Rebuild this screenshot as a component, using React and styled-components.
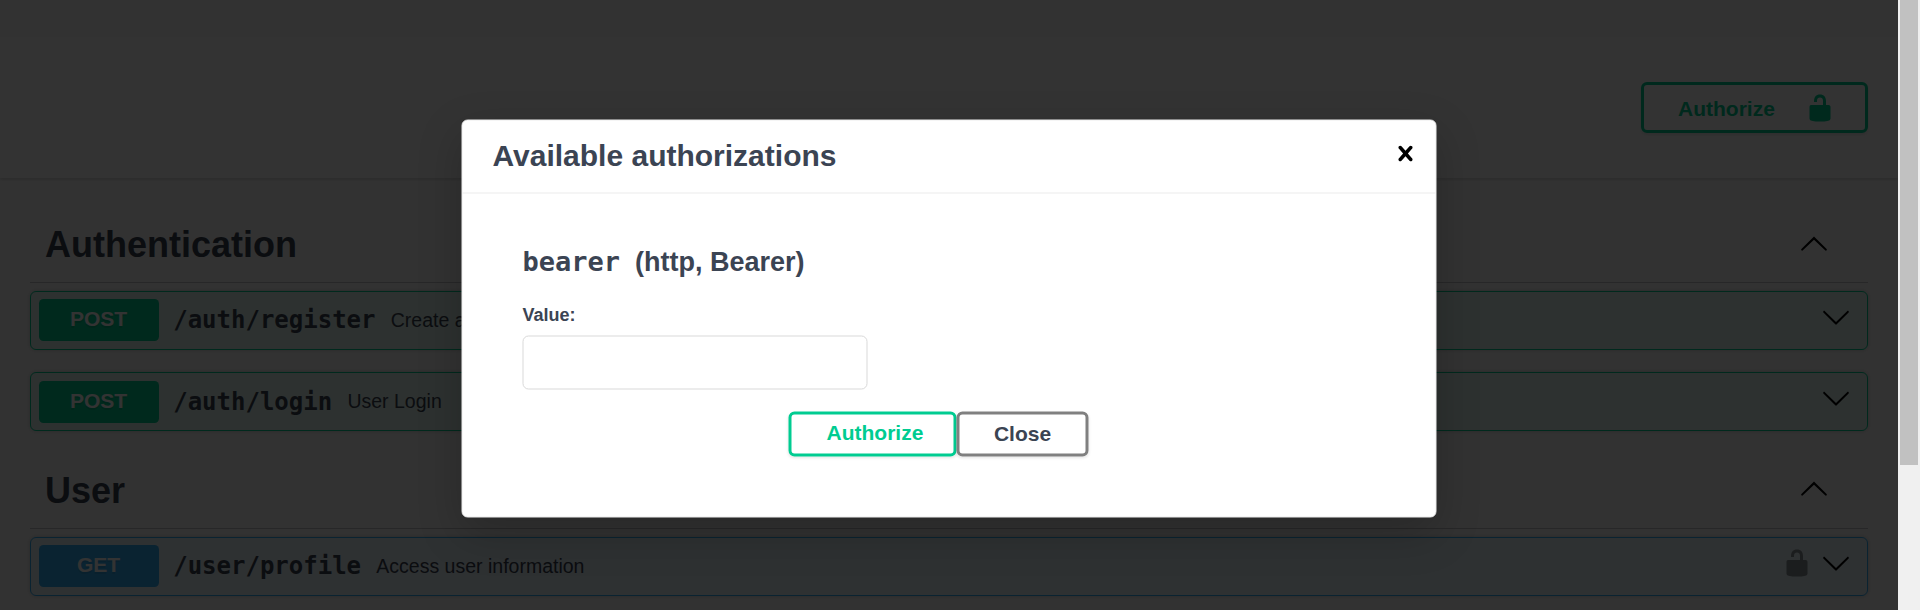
import React from "react";
import styled, { createGlobalStyle } from "styled-components";

const SANS = '"Liberation Sans", Arial, sans-serif';
const MONO = '"DejaVu Sans Mono", "Liberation Mono", monospace';
const INK = "#3b4453";
const GREEN = "#00cc91";
const BLUE = "#35aff5";

const GlobalStyle = createGlobalStyle`
  *, *::before, *::after { box-sizing: border-box; }
  html, body { margin: 0; padding: 0; }
  body { font-family: ${SANS}; color: ${INK}; background: #fafafa; overflow: hidden; }
`;

const Screen = styled.div`
  position: relative;
  display: flex;
  width: 1920px;
  height: 610px;
  overflow: hidden;
`;

const Page = styled.main`
  width: 1898px;
  height: 610px;
  padding-top: 37px;
  background: #fafafa;
  overflow: hidden;
`;

const ScrollTrack = styled.div`
  position: relative;
  z-index: 2;
  width: 22px;
  padding: 0 2px;
  background: #f0f0f0;
`;

const ScrollThumb = styled.div`
  height: 465px;
  background: #c1c1c1;
`;

const SchemeBar = styled.section`
  display: flex;
  justify-content: flex-end;
  height: 141px;
  padding: 45px 30px;
  background: #fff;
  box-shadow: 0 1.5px 3px rgba(0, 0, 0, 0.15);
`;

const Button = styled.button`
  display: flex;
  align-items: center;
  height: 45px;
  padding: 0;
  border: 3px solid ${(p) => p.$border};
  border-radius: 6px;
  background: transparent;
  box-shadow: 0 1.5px 3px rgba(0, 0, 0, 0.1);
  color: ${(p) => p.$color};
  font: bold 21px/39px ${SANS};
`;

const OpenAuthButton = styled(Button)`
  justify-content: space-between;
  width: 227px;
  height: 51px;
  padding: 0 30px 0 34px;

  span { padding-top: 2px; }
`;

const AuthorizeButton = styled(Button)`
  width: 168px;
  padding: 0 0 4px 35px;
`;

const CloseButton = styled(Button)`
  justify-content: center;
  width: 132px;
  padding-bottom: 2px;
`;

const Sections = styled.div`
  display: flex;
  flex-direction: column;
  padding: 30px 30px 0;
`;

const TagSection = styled.section`
  margin-bottom: 22.6px;
`;

const TagHeader = styled.h3`
  display: flex;
  justify-content: space-between;
  align-items: flex-start;
  height: 75px;
  margin: 0 0 8px;
  padding: 15px 39px 15px 15px;
  border-bottom: 1px solid rgba(59, 65, 81, 0.3);
  font: bold 36px/44px ${SANS};

  svg { margin-top: 4.5px; }
`;

const Operations = styled.div`
  display: flex;
  flex-direction: column;
  gap: 22.4px;
`;

const Operation = styled.div`
  display: flex;
  align-items: center;
  height: 59px;
  padding: 7.4px 16px 7.6px 8px;
  border: 1px solid ${(p) => p.$color};
  border-radius: 6px;
  background: ${(p) => p.$tint};
  box-shadow: 0 0 4.5px rgba(0, 0, 0, 0.19);
`;

const Method = styled.span`
  width: 120px;
  height: 42px;
  padding-right: 1px;
  border-radius: 4.5px;
  background: ${(p) => p.$color};
  color: #fff;
  font: bold 21px/40px ${SANS};
  text-align: center;
  text-shadow: 0 1.5px 0 rgba(0, 0, 0, 0.1);
`;

const Path = styled.span`
  margin: 0 15.3px 0 14.2px;
  font: bold 24px/28px ${MONO};
`;

const Summary = styled.span`
  flex: 1;
  padding-bottom: 1px;
  font: 19.5px/22px ${SANS};
`;

const OperationIcons = styled.span`
  display: flex;
  gap: 9.2px;
  align-self: flex-start;
  margin-top: 2.6px;
`;

const Icon = styled.svg`
  display: block;
  flex: none;
  width: 30px;
  height: 30px;
  fill: ${(p) => p.$fill || "#000"};
  opacity: ${(p) => p.$opacity || 1};
`;

const Backdrop = styled.div`
  position: absolute;
  inset: 0 22px 0 0;
  background: rgba(0, 0, 0, 0.8);
`;

const Dialog = styled.div`
  position: absolute;
  top: 319px;
  left: 50%;
  width: 975px;
  height: 398px;
  transform: translate(-50%, calc(-50% - 0.5px));
  border: 1px solid #ebebeb;
  border-radius: 6px;
  background: #fff;
  box-shadow: 0 15px 45px rgba(0, 0, 0, 0.2);
`;

const DialogHeader = styled.header`
  display: flex;
  justify-content: space-between;
  align-items: center;
  height: 73px;
  padding: 0 15px 0 30px;
  border-bottom: 1px solid #ebebeb;

  h3 { margin: 0; padding-bottom: 3px; font: bold 30px/68px ${SANS}; }
`;

const IconButton = styled.button`
  padding: 0;
  margin-bottom: 6px;
  border: 0;
  background: none;
`;

const DialogBody = styled.div`
  display: flex;
  flex-direction: column;
  padding: 52px 60px 0;
`;

const SchemeTitle = styled.h4`
  display: flex;
  align-items: baseline;
  gap: 15px;
  height: 32px;
  margin: 0 0 27px;
  font: bold 27px/32px ${SANS};

  code { font-family: ${MONO}; }
`;

const Label = styled.label`
  margin-bottom: 11px;
  font: bold 18px/20px ${SANS};
`;

const Input = styled.input`
  width: 345px;
  height: 54px;
  padding: 12px 15px;
  border: 1px solid #d9d9d9;
  border-radius: 6px;
  background: #fff;
`;

const DialogActions = styled.div`
  display: flex;
  justify-content: center;
  margin-top: 22px;
  padding-right: 21px;
`;

const Unlocked = (props) => (
  <Icon viewBox="0 0 20 20" {...props}>
    <path d="M15.8 8H14V5.6C14 2.703 12.665 1 10 1 7.334 1 6 2.703 6 5.6V6h2v-.801C8 3.754 8.797 3 10 3c1.203 0 2 .754 2 2.199V8H4c-.553 0-1 .646-1 1.199V17c0 .549.428 1.139.951 1.307l1.197.387C5.672 18.861 6.55 19 7.1 19h5.8c.549 0 1.428-.139 1.951-.307l1.196-.387c.524-.167.953-.757.953-1.306V9.199C17 8.646 16.352 8 15.8 8z" />
  </Icon>
);

const ArrowUp = () => (
  <Icon viewBox="0 0 20 20">
    <path d="M17.418 14.908c.272.268.709.268.979 0s.271-.701 0-.969l-7.908-7.83c-.27-.268-.707-.268-.979 0l-7.908 7.83c-.27.268-.27.701 0 .969.271.268.709.268.979 0L10 7.767l7.418 7.141z" />
  </Icon>
);

const ArrowDown = () => (
  <Icon viewBox="0 0 20 20">
    <path d="M17.418 6.109c.272-.268.709-.268.979 0s.271.701 0 .969l-7.908 7.83c-.27.268-.707.268-.979 0l-7.908-7.83c-.27-.268-.27-.701 0-.969.271-.268.709-.268.979 0L10 13.25l7.418-7.141z" />
  </Icon>
);

const Cross = () => (
  <Icon viewBox="0 0 20 20">
    <path d="M14.348 14.849c-.469.469-1.229.469-1.697 0L10 11.819l-2.651 3.029c-.469.469-1.229.469-1.697 0-.469-.469-.469-1.229 0-1.697l2.758-3.15-2.759-3.152c-.469-.469-.469-1.228 0-1.697.469-.469 1.228-.469 1.697 0L10 8.183l2.651-3.031c.469-.469 1.228-.469 1.697 0 .469.469.469 1.229 0 1.697l-2.758 3.152 2.758 3.15c.469.469.469 1.229 0 1.698z" />
  </Icon>
);

const METHODS = {
  POST: { color: GREEN, tint: "rgba(0, 204, 145, 0.1)" },
  GET: { color: BLUE, tint: "rgba(53, 175, 245, 0.1)" },
};

const TAGS = [
  {
    name: "Authentication",
    operations: [
      { method: "POST", path: "/auth/register", summary: "Create a new user" },
      { method: "POST", path: "/auth/login", summary: "User Login" },
    ],
  },
  {
    name: "User",
    operations: [
      { method: "GET", path: "/user/profile", summary: "Access user information", secured: true },
    ],
  },
];

function OperationRow({ method, path, summary, secured }) {
  const { color, tint } = METHODS[method];
  return (
    <Operation $color={color} $tint={tint}>
      <Method $color={color}>{method}</Method>
      <Path>{path}</Path>
      <Summary>{summary}</Summary>
      <OperationIcons>
        {secured && <Unlocked $opacity={0.4} />}
        <ArrowDown />
      </OperationIcons>
    </Operation>
  );
}

function AuthDialog() {
  return (
    <Dialog role="dialog">
      <DialogHeader>
        <h3>Available authorizations</h3>
        <IconButton aria-label="Close dialog">
          <Cross />
        </IconButton>
      </DialogHeader>
      <DialogBody>
        <SchemeTitle>
          <code>bearer</code>
          <span>(http, Bearer)</span>
        </SchemeTitle>
        <Label htmlFor="token">Value:</Label>
        <Input id="token" type="text" />
        <DialogActions>
          <AuthorizeButton $border={GREEN} $color={GREEN}>Authorize</AuthorizeButton>
          <CloseButton $border="#808080" $color={INK}>Close</CloseButton>
        </DialogActions>
      </DialogBody>
    </Dialog>
  );
}

export default function App() {
  return (
    <>
      <GlobalStyle />
      <Screen>
        <Page>
          <SchemeBar>
            <OpenAuthButton $border={GREEN} $color={GREEN}>
              <span>Authorize</span>
              <Unlocked $fill={GREEN} />
            </OpenAuthButton>
          </SchemeBar>
          <Sections>
            {TAGS.map((tag) => (
              <TagSection key={tag.name}>
                <TagHeader>
                  {tag.name}
                  <ArrowUp />
                </TagHeader>
                <Operations>
                  {tag.operations.map((op) => (
                    <OperationRow key={op.path} {...op} />
                  ))}
                </Operations>
              </TagSection>
            ))}
          </Sections>
        </Page>
        <Backdrop>
          <AuthDialog />
        </Backdrop>
        <ScrollTrack>
          <ScrollThumb />
        </ScrollTrack>
      </Screen>
    </>
  );
}
